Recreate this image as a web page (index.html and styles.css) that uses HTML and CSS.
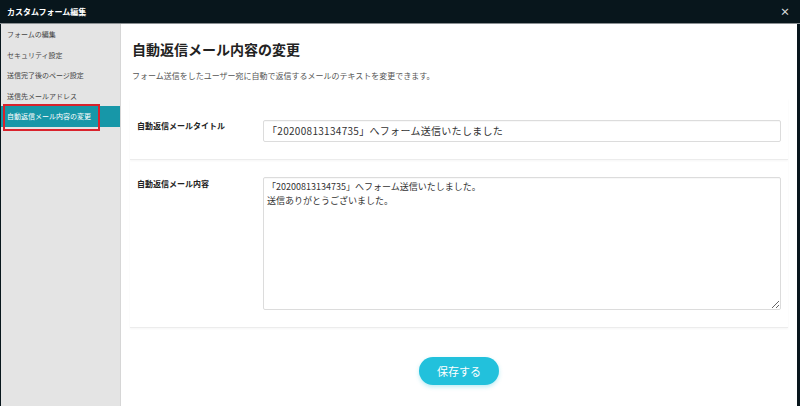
FILE: index.html
```html
<!DOCTYPE html>
<html lang="ja">
<head>
    <meta charset="UTF-8">
    <link rel="stylesheet" href="styles.css">
</head>
<body>
    <div class="modal">
        <div class="modal-header">
            <div class="modal-title">カスタムフォーム編集</div>
            <div class="modal-close">×</div>
        </div>
        <div class="modal-body">
            <ul class="side-menu">
                <li class="side-item">フォームの編集</li>
                <li class="side-item">セキュリティ設定</li>
                <li class="side-item">送信完了後のページ設定</li>
                <li class="side-item">送信先メールアドレス</li>
                <li class="side-item active">自動返信メール内容の変更</li>
            </ul>
            <div class="highlight-box"></div>

            <div class="content">
                <h1 class="page-title">自動返信メール内容の変更</h1>
                <p class="page-desc">フォーム送信をしたユーザー宛に自動で返信するメールのテキストを変更できます。</p>

                <div class="form-row form-row-single">
                    <label class="form-label">自動返信メールタイトル</label>
                    <div class="form-field">
                        <input class="text-input" type="text" value="「20200813134735」へフォーム送信いたしました">
                    </div>
                </div>

                <div class="form-row">
                    <label class="form-label">自動返信メール内容</label>
                    <div class="form-field">
                        <textarea class="text-area">「20200813134735」へフォーム送信いたしました。
送信ありがとうございました。</textarea>
                    </div>
                </div>

                <div class="form-actions">
                    <button class="save-button">保存する</button>
                </div>
            </div>
        </div>
    </div>
</body>
</html>
```

FILE: styles.css
```css
html,
body {
    margin: 0;
    padding: 0;
    height: 100%;
}

body {
    background: #08161c;
    font-family: "Noto Sans CJK JP", "Noto Sans", sans-serif;
    color: #333;
}

.modal {
    display: flex;
    flex-direction: column;
    height: 406px;
}

.modal-header {
    height: 23px;
    display: flex;
    align-items: center;
    justify-content: space-between;
    padding: 0 10px 0 7px;
    background: #08161c;
    border-bottom: 1px solid #8a8f92;
}

.modal-title {
    color: #fff;
    font-size: 8px;
    font-weight: bold;
}

.modal-close {
    color: #d8dcde;
    font-size: 10px;
    font-weight: bold;
    line-height: 1;
}

.modal-body {
    position: relative;
    flex: 1;
    display: flex;
    border-left: 1px solid #08161c;
    border-right: 3px solid #08161c;
}

/* 左メニュー */
.side-menu {
    list-style: none;
    margin: 0;
    padding: 0;
    width: 119px;
    background: #e4e4e4;
    border-right: 1px solid #d6d6d6;
}

.side-item {
    height: 20.5px;
    line-height: 20.5px;
    padding-left: 6px;
    font-size: 7px;
    color: #444;
    white-space: nowrap;
}

.side-item.active {
    background: #1797a8;
    color: #fff;
}

.highlight-box {
    position: absolute;
    left: 2px;
    top: 80px;
    width: 93px;
    height: 23px;
    border: 2px solid #d9222c;
}

/* メイン */
.content {
    flex: 1;
    background: #fff;
    padding: 15px 9px 0;
}

.page-title {
    margin: 0;
    padding-left: 2px;
    font-size: 14px;
    line-height: 20px;
    font-weight: bold;
    color: #222;
}

.page-desc {
    margin: 11px 0 17px;
    padding-left: 2px;
    font-size: 8px;
    line-height: 12px;
    color: #555;
}

.form-row {
    display: flex;
    padding: 17px 7px;
    border-bottom: 1px solid #ececec;
    box-shadow: 0 1px 2px rgba(0, 0, 0, 0.04);
}

.form-label {
    width: 126px;
    flex-shrink: 0;
    margin-top: 1px;
    font-size: 8px;
    line-height: 12px;
    font-weight: bold;
    color: #222;
}

.form-row-single .form-label {
    margin-top: 4px;
}

.form-field {
    flex: 1;
}

.text-input,
.text-area {
    box-sizing: border-box;
    width: 100%;
    margin: 0;
    border: 1px solid #dcdcdc;
    border-radius: 2px;
    box-shadow: inset 0 1px 1px rgba(0, 0, 0, 0.03);
    font-family: "Noto Sans CJK JP", "Noto Sans", sans-serif;
    color: #333;
    outline: none;
}

.text-input {
    height: 22px;
    padding: 0 3px;
    font-size: 10px;
    letter-spacing: 0.3px;
}

.text-area {
    display: block;
    height: 133px;
    padding: 2px 3px;
    font-size: 9px;
    line-height: 14px;
    resize: vertical;
}

.form-actions {
    display: flex;
    justify-content: center;
    margin-top: 29px;
}

.save-button {
    width: 80px;
    height: 28px;
    border: none;
    border-radius: 14px;
    background: #22c1dc;
    color: #fff;
    font-family: "Noto Sans CJK JP", sans-serif;
    font-size: 11px;
    box-shadow: 0 2px 4px rgba(34, 193, 220, 0.3);
}
```
